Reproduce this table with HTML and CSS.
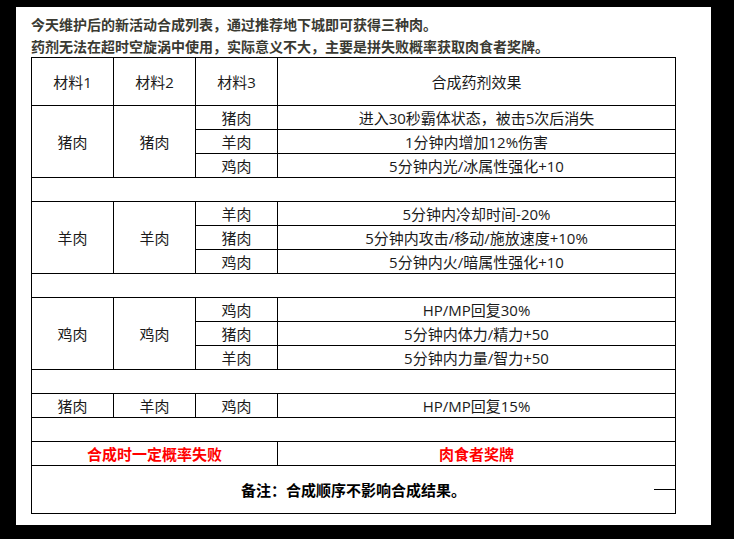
FILE: index.html
```html
<!DOCTYPE html>
<html lang="zh-CN">
<head>
<meta charset="utf-8">
<link rel="stylesheet" href="styles.css">
</head>
<body>
<div class="panel">
  <p class="intro">今天维护后的新活动合成列表，通过推荐地下城即可获得三种肉。<br>药剂无法在超时空旋涡中使用，实际意义不大，主要是拼失败概率获取肉食者奖牌。</p>
  <table class="recipes">
    <colgroup>
      <col class="c1"><col class="c2"><col class="c3"><col class="c4">
    </colgroup>
    <tr class="head"><td>材料1</td><td>材料2</td><td>材料3</td><td>合成药剂效果</td></tr>
    <tr><td rowspan="3">猪肉</td><td rowspan="3">猪肉</td><td>猪肉</td><td>进入30秒霸体状态，被击5次后消失</td></tr>
    <tr><td>羊肉</td><td>1分钟内增加12%伤害</td></tr>
    <tr><td>鸡肉</td><td>5分钟内光/冰属性强化+10</td></tr>
    <tr class="gap"><td colspan="4"></td></tr>
    <tr><td rowspan="3">羊肉</td><td rowspan="3">羊肉</td><td>羊肉</td><td>5分钟内冷却时间-20%</td></tr>
    <tr><td>猪肉</td><td>5分钟内攻击/移动/施放速度+10%</td></tr>
    <tr><td>鸡肉</td><td>5分钟内火/暗属性强化+10</td></tr>
    <tr class="gap"><td colspan="4"></td></tr>
    <tr><td rowspan="3">鸡肉</td><td rowspan="3">鸡肉</td><td>鸡肉</td><td>HP/MP回复30%</td></tr>
    <tr><td>猪肉</td><td>5分钟内体力/精力+50</td></tr>
    <tr><td>羊肉</td><td>5分钟内力量/智力+50</td></tr>
    <tr class="gap"><td colspan="4"></td></tr>
    <tr><td>猪肉</td><td>羊肉</td><td>鸡肉</td><td>HP/MP回复15%</td></tr>
    <tr class="gap"><td colspan="4"></td></tr>
    <tr class="warn"><td colspan="3">合成时一定概率失败</td><td>肉食者奖牌</td></tr>
    <tr class="note"><td colspan="4"><span class="stub"></span>备注：合成顺序不影响合成结果。</td></tr>
  </table>
</div>
</body>
</html>
```
FILE: styles.css
```css
html, body {
  margin: 0;
  padding: 0;
  background: #000;
}
body {
  width: 734px;
  height: 539px;
  overflow: hidden;
  font-family: "Noto Sans CJK SC", "Microsoft YaHei", sans-serif;
}
.panel {
  margin: 7px 0 0 16px;
  width: 695px;
  height: 518px;
  background: #fff;
  padding: 6px 0 0 15px;
  box-sizing: border-box;
}
.intro {
  margin: 0;
  font-size: 14px;
  line-height: 22px;
  font-weight: bold;
  color: #3a3a32;
  white-space: nowrap;
}
.recipes {
  border-collapse: collapse;
  width: 645px;
  table-layout: fixed;
  font-family: "Open Sans", "Noto Sans CJK SC", sans-serif;
  font-size: 15px;
  color: #1a1a1a;
}
.c1 { width: 82px; }
.c2 { width: 82px; }
.c3 { width: 82px; }
.c4 { width: auto; }
.recipes td {
  border: 1px solid #000;
  height: 23px;
  padding: 0;
  text-align: center;
  vertical-align: middle;
  line-height: 20px;
  white-space: nowrap;
}
.recipes .head td { height: 47px; }
.recipes .warn td {
  color: #ff0000;
  font-weight: bold;
}
.recipes .note td {
  height: 47px;
  font-weight: bold;
  color: #000;
  position: relative;
}
.stub {
  position: absolute;
  right: 0;
  top: 23px;
  width: 21px;
  height: 1px;
  background: #000;
}
```
